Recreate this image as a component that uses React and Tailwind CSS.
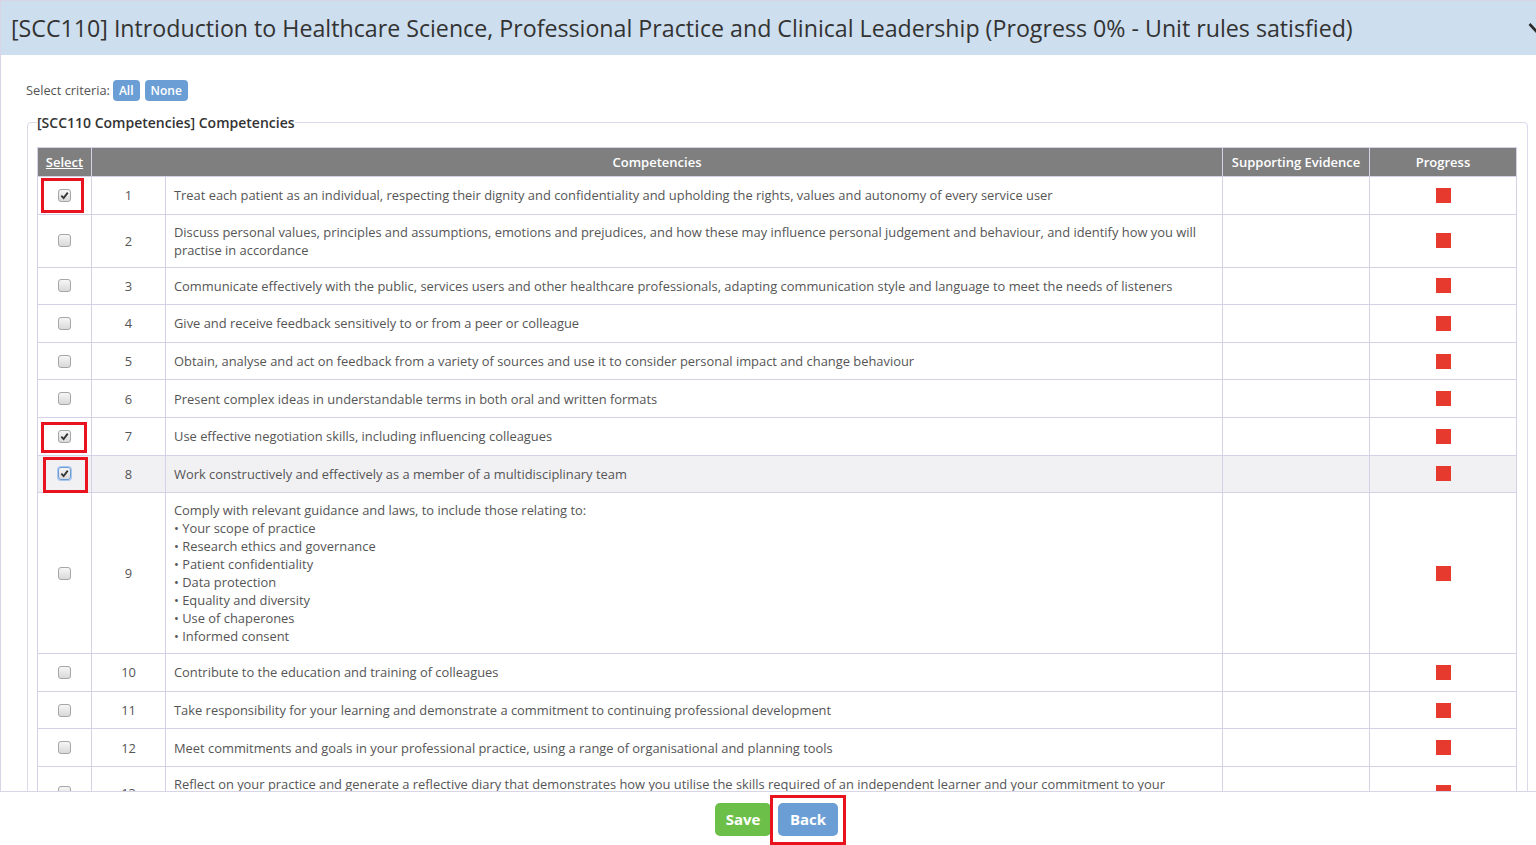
import React from 'react';

const rows = [
  { n: 1, text: 'Treat each patient as an individual, respecting their dignity and confidentiality and upholding the rights, values and autonomy of every service user', checked: true, mark: 'left-[3px] top-[1px] w-[43px] h-[35px]' },
  { n: 2, text: 'Discuss personal values, principles and assumptions, emotions and prejudices, and how these may influence personal judgement and behaviour, and identify how you will practise in accordance' },
  { n: 3, text: 'Communicate effectively with the public, services users and other healthcare professionals, adapting communication style and language to meet the needs of listeners' },
  { n: 4, text: 'Give and receive feedback sensitively to or from a peer or colleague' },
  { n: 5, text: 'Obtain, analyse and act on feedback from a variety of sources and use it to consider personal impact and change behaviour' },
  { n: 6, text: 'Present complex ideas in understandable terms in both oral and written formats' },
  { n: 7, text: 'Use effective negotiation skills, including influencing colleagues', checked: true, mark: 'left-[3px] top-[4px] w-[46px] h-[31px]' },
  { n: 8, text: 'Work constructively and effectively as a member of a multidisciplinary team', checked: true, focus: true, hover: true, mark: 'left-[5px] top-[1px] w-[45px] h-[36px]' },
  {
    n: 9,
    text: 'Comply with relevant guidance and laws, to include those relating to:',
    bullets: ['Your scope of practice', 'Research ethics and governance', 'Patient confidentiality', 'Data protection', 'Equality and diversity', 'Use of chaperones', 'Informed consent'],
  },
  { n: 10, text: 'Contribute to the education and training of colleagues' },
  { n: 11, text: 'Take responsibility for your learning and demonstrate a commitment to continuing professional development' },
  { n: 12, text: 'Meet commitments and goals in your professional practice, using a range of organisational and planning tools' },
  { n: 13, text: 'Reflect on your practice and generate a reflective diary that demonstrates how you utilise the skills required of an independent learner and your commitment to your continuing professional development' },
];

const Checkbox = ({ checked, focus }) => (
  <span
    className={`inline-flex items-center justify-center w-[13px] h-[13px] rounded-[3px] border bg-gradient-to-b from-[#f6f6f6] to-[#d9d9d9] ${
      focus ? 'border-[#6a9cd8] shadow-[0_0_0_1px_#a9c8ee]' : 'border-[#a6a6a6]'
    }`}
  >
    {checked && (
      <svg width="9" height="9" viewBox="0 0 10 10">
        <path d="M1.5 5.2 L4 7.8 L8.6 1.8" fill="none" stroke="#333" strokeWidth="2" />
      </svg>
    )}
  </span>
);

export default function App() {
  return (
    <div className="h-[845px] w-[1536px] overflow-hidden flex flex-col bg-white font-['Open_Sans',sans-serif] text-[#555]">
      <div className="h-[55px] shrink-0 flex items-center justify-between bg-[#cddeee] border-t border-l border-[#d8d5e6] pl-[10px]">
        <h1 className="text-[23.2px] leading-[30px] text-[#333] whitespace-nowrap">
          [SCC110] Introduction to Healthcare Science, Professional Practice and Clinical Leadership (Progress 0% - Unit rules satisfied)
        </h1>
        <svg width="16" height="12" viewBox="0 0 16 12" className="-mr-[8px] shrink-0">
          <path d="M1.5 2 L8 9 L14.5 2" fill="none" stroke="#2b2b2b" strokeWidth="2.6" />
        </svg>
      </div>

      <div className="flex-1 overflow-hidden border-l border-b border-[#d8d5e6] pl-[25px] pt-[24px]">
        <div className="flex items-center h-[23px]">
          <span className="text-[12.8px] text-[#555] mr-[3px]">Select criteria:</span>
          <button className="h-[21px] px-[6px] rounded-[4px] bg-[#6a9ed4] text-white text-[12px] font-semibold">All</button>
          <button className="h-[21px] ml-[5px] px-[6px] rounded-[4px] bg-[#6a9ed4] text-white text-[12px] font-semibold">None</button>
        </div>

        <fieldset className="mt-[11px] ml-[1px] w-[1501px] border border-[#dcd9ea] rounded-[4px] px-[9px] pt-[15px]">
          <legend className="px-0 text-[14px] leading-[19px] font-semibold text-[#333]">[SCC110 Competencies] Competencies</legend>
          <table className="table-fixed w-[1479px] border-collapse text-[12.9px] leading-[18px]">
            <colgroup>
              <col className="w-[54px]" />
              <col className="w-[74px]" />
              <col className="w-[1057px]" />
              <col className="w-[147px]" />
              <col className="w-[147px]" />
            </colgroup>
            <thead>
              <tr className="bg-[#7f7f7f] text-white font-semibold text-[13px]">
                <th className="border border-[#d5d1e6] py-[5px] underline font-semibold">Select</th>
                <th colSpan={2} className="border border-[#d5d1e6] py-[5px] font-semibold">Competencies</th>
                <th className="border border-[#d5d1e6] py-[5px] font-semibold">Supporting Evidence</th>
                <th className="border border-[#d5d1e6] py-[5px] font-semibold">Progress</th>
              </tr>
            </thead>
            <tbody>
              {rows.map((r) => (
                <tr key={r.n} className={r.hover ? 'bg-[#f1f1f4]' : ''}>
                  <td className="relative border border-[#d5d1e6] py-[8px] text-center align-middle">
                    <div className="h-[20.6px] flex items-center justify-center">
                      <Checkbox checked={r.checked} focus={r.focus} />
                    </div>
                    {r.mark && <div className={`absolute border-[3px] border-[#e8131f] ${r.mark}`} />}
                  </td>
                  <td className="border border-[#d5d1e6] py-[8px] text-center align-middle">{r.n}</td>
                  <td className="border border-[#d5d1e6] py-[8px] px-[8px] align-middle">
                    <div>{r.text}</div>
                    {r.bullets && r.bullets.map((b) => <div key={b}>• {b}</div>)}
                  </td>
                  <td className="border border-[#d5d1e6]" />
                  <td className="border border-[#d5d1e6] align-middle">
                    <div className="mx-auto w-[15px] h-[15px] bg-[#e63a2e]" />
                  </td>
                </tr>
              ))}
            </tbody>
          </table>
        </fieldset>
      </div>

      <div className="h-[53px] shrink-0 flex justify-center items-start pt-[11px] pl-[17px] gap-[7px]">
        <button className="h-[33px] w-[56px] rounded-[5px] bg-[#6cc04a] text-white text-[15px] font-bold">Save</button>
        <div className="relative">
          <button className="h-[33px] w-[60px] rounded-[5px] bg-[#6a9ed4] text-white text-[15px] font-bold">Back</button>
          <div className="absolute -left-[8px] -top-[8px] w-[76px] h-[50px] border-[3px] border-[#e8131f]" />
        </div>
      </div>
    </div>
  );
}
